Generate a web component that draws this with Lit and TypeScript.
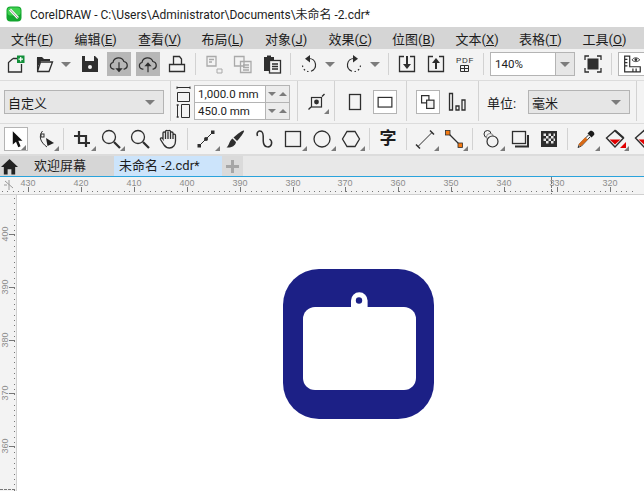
import { LitElement, css, html, svg } from "lit";
import { customElement } from "lit/decorators.js";

const DARK = "#2e2e2e";
const DIM = "#a9a9a9";

const line = (d: string, c = DARK, w = 1.3) =>
  svg`<path d=${d} fill="none" stroke=${c} stroke-width=${w} />`;
const fill = (d: string, c = DARK) => svg`<path d=${d} fill=${c} />`;

const cloud = "M7 17.5H6a3.6 3.6 0 0 1-.6-7.1 6.2 6.2 0 0 1 11.9-1.1 4.2 4.2 0 0 1 .7 8.2H17";

const icons: Record<string, unknown> = {
  new: svg`${line("M9 6.5H13M17.5 12V20H4.500V10.500L9 6.500")}
    <rect x="13" y="3.500" width="7.500" height="7.500" fill="#12903a" />
    ${line("M16.700 5V9.500M14.500 7.200H19", "#fff", 1.200)}`,
  open: svg`${fill("M4 5h5l2 2h6v2H8l-2 4-2 1z")}${line("M4.600 6V19.500H16L19.500 10H7.500L4.600 19")}`,
  save: svg`${fill("M4 4H17L20 7V20H4z")}<rect x="7" y="4" width="9" height="5" fill="#f3f3f3" /><circle cx="12" cy="15" r="2" fill="#f3f3f3" />`,
  down: svg`${line(cloud)}${line("M12 10V20")}${fill("M8 16.500H16L12 21z")}`,
  up: svg`${line(cloud)}${line("M12 13V21")}${fill("M8 14.500H16L12 10z")}`,
  print: svg`${line("M8.500 12V4.500H14.500L16.500 7V12M4.500 12.500H19.500V19.500H4.500z")}`,
  copy: svg`${line("M5 4.500H14V14H5zM7 7.500H12M7 10H10", DIM)}${line("M15 17H20V21H15z", DIM, 1)}`,
  clone: svg`${line("M3.500 4.500H13V14H3.500zM9.500 9.500H20V20.500H9.500zM12 13H18M12 15.500H18M12 18H18", DIM)}`,
  paste: svg`${fill("M4 5h3V3.500h4V5h3v14H4z")}<rect x="9.500" y="8.500" width="11" height="12.500" fill="#f3f3f3" stroke=${DARK} stroke-width="1.300" />${line("M12 12H18M12 14.500H18M12 17H18")}`,
  undo: svg`${line("M12 6.500A6.500 6.500 0 0 1 14 19.200", DARK, 1.200)}
    <path d="M11.500 19.500A6.500 6.500 0 0 1 5.500 13" fill="none" stroke=${DARK} stroke-width="1.200" stroke-dasharray="1.500 2.200" />
    ${fill("M13 3V10.500L8 6.800z")}`,
  redo: svg`${line("M12 6.500A6.500 6.500 0 0 0 10 19.200", DARK, 1.200)}
    <path d="M12.500 19.500A6.500 6.500 0 0 0 18.500 13" fill="none" stroke=${DARK} stroke-width="1.200" stroke-dasharray="1.500 2.200" />
    ${fill("M11 3V10.500L16 6.800z")}`,
  import: svg`${line("M9 4.500H4.500V19.500H19.500V4.500H15")}${line("M12 4V13", DARK, 2)}${fill("M8 12H16L12 17z")}`,
  export: svg`${line("M9 4.500H4.500V19.500H19.500V4.500H15")}${line("M12 10V17", DARK, 2)}${fill("M8 11H16L12 6z")}`,
  pdf: svg`<text x="12" y="11" text-anchor="middle" font-size="8" font-family="Liberation Sans, sans-serif" letter-spacing=".6" fill=${DARK}>PDF</text>${line("M7.500 13.500H15.500V19.500H7.500zM11.500 13.500V19.500M7.500 16.500H15.500", DARK, 1)}`,
  full: svg`${line("M4 8V4H8M16 4H20V8M4 16V20H8M16 20H20V16")}<rect x="6.500" y="6.500" width="11" height="11" fill=${DARK} />`,
  options: svg`${line("M4 3.500V20.500H21V15H9.500V3.500zM4 7H7M4 10.500H7M4 14H7M13 17V20.500M16.500 17V20.500")}${line("M12 7.500C14 4.500 18 4.500 20.500 7.500C18 10 14 10 12 7.500z", DARK, 1)}<circle cx="16.200" cy="7.300" r="1.500" fill=${DARK} />`,
  margin: svg`<rect x="5.500" y="7.500" width="10" height="9.500" fill="none" stroke=${DARK} stroke-width="1.200" />
    <circle cx="10.500" cy="12" r="2.400" fill=${DARK} />
    <path d="M2.500 19.500L5 17M16 6.500L18.500 4" stroke=${DARK} stroke-width="1.400" fill="none" />`,
  portrait: svg`<rect x="6.500" y="4.500" width="11" height="15" fill="none" stroke=${DARK} stroke-width="1.300" />`,
  landscape: svg`<rect x="4.500" y="7" width="15" height="10.500" fill="none" stroke=${DARK} stroke-width="1.300" />`,
  pages: svg`${line("M5 5H13V13H5z")}<rect x="10.500" y="10" width="8" height="9" fill="#f3f3f3" stroke=${DARK} stroke-width="1.300" />`,
  bars: svg`${line("M4.500 3.500H7.500V20H4.500zM11 16H14V20H11zM17 10H20V20H17z")}`,
  pointer: svg`${fill("M8.500 3.500L19 14H14.500L17 20L14.500 21L12 15L8.500 18z", "#111")}`,
  shape: svg`${line("M9.500 4C5.500 9 7 15 14 20", DARK, 1)}<rect x="8" y="7" width="3" height="3" fill="#f3f3f3" stroke=${DARK} stroke-width="1" />${fill("M13 11L21 16L14.500 19z", "#222")}`,
  crop: svg`${line("M9 4V16H20M4 9H16V20", DARK, 2.200)}`,
  zoomA: svg`<circle cx="10" cy="10" r="6.500" fill="none" stroke=${DARK} stroke-width="1.300" />${line("M15 15L21 21", DARK, 2.200)}`,
  hand: svg`${line("M7 18L3.500 12.500C3 10.500 5 10.500 6 12V6C6 4.500 8 4.500 8.500 6V4.500C8.500 3 11 3 11 4.500V4.500C11 3 13.500 3 13.500 4.500V5.500C13.500 4.500 16 4.500 16 6V8C16 6.800 18.500 6.800 18.500 8.500V14C18.500 18 16 21 12.500 21C10 21 8.500 20 7 18ZM8.500 6V12M11 5V12M13.500 5.500V12M16 8V12")}`,
  node: svg`${line("M5 19L19 5", DARK, 1)}<rect x="3.500" y="17" width="3.500" height="3.500" fill=${DARK} /><rect x="17" y="3.500" width="3.500" height="3.500" fill=${DARK} /><circle cx="12" cy="12" r="2" fill=${DARK} />`,
  brush: svg`${fill("M21 3.500C22 4.500 16 12 14 14L10.500 10.500C12.500 8.500 20 2.500 21 3.500z")}${fill("M9.500 11.500L13 15C12.500 19 8 21 3.500 20.500C6 19 6 14 9.500 11.500z")}`,
  curve: svg`${line("M5.500 9C4 5 7 3 9.500 4.500C12.500 6.500 10.500 12 11.500 16C12.500 21 18.500 21 19.500 17C20 15 19 13 17.500 12", DARK, 1.500)}`,
  rect: svg`<rect x="4.500" y="4.500" width="15" height="15" fill="none" stroke=${DARK} stroke-width="1.300" />`,
  ellipse: svg`<circle cx="12" cy="12" r="8" fill="none" stroke=${DARK} stroke-width="1.300" />`,
  hex: svg`${line("M8 4.500H16L20.500 12L16 19.500H8L3.500 12z")}`,
  dim: svg`${line("M5 19.500L19 5.500", DARK, 1)}${line("M3 17.500L7 21.500M17 3.500L21 7.500", DARK, 1.500)}`,
  link: svg`${line("M7 7L17 17", DARK, 1.300)}<rect x="3.500" y="3.500" width="4.500" height="4.500" fill="#f47a12" stroke=${DARK} stroke-width=".8" /><rect x="16" y="16" width="4.500" height="4.500" fill="#f47a12" stroke=${DARK} stroke-width=".8" />`,
  blend: svg`<circle cx="8.500" cy="7" r="3.500" fill="none" stroke=${DARK} stroke-width="1" /><circle cx="11" cy="10" r="3.500" fill="#f3f3f3" stroke="#888" stroke-width="1" /><circle cx="13.500" cy="14.500" r="5.500" fill="#f3f3f3" stroke=${DARK} stroke-width="1.200" />`,
  shadow: svg`<rect x="4.500" y="4.500" width="13" height="12" fill="none" stroke=${DARK} stroke-width="1.300" />${line("M20 8V19.500H7", DARK, 2)}`,
  checker: svg`<rect x="4" y="4" width="16" height="16" fill=${DARK} /><path d="M6.500 6.500h2.500v2.500h-2.500zM11.500 6.500h2.500v2.500h-2.500zM16.500 6.500h1.500v2.500h-1.500zM9 9h2.500v2.500H9zM14 9h2.500v2.500H14zM6.500 11.500h2.500V14H6.500zM11.500 11.500H14V14h-2.500zM16.500 11.500H18V14h-1.500zM9 14h2.500v2.500H9zM14 14h2.500v2.500H14z" fill="#e8e8e8" />`,
  dropper: svg`${fill("M13.500 6.500L17.500 10.500L20 8C21.500 6 18 2.500 16 4z", "#1c1c1c")}
    ${line("M14.500 8L5.500 17L4 20.500L7.500 19L16 10", DARK, 1)}${line("M12 11L5.800 17.500L6.500 18.200L13 12", "#d96a16", 2)}`,
  fillRed: svg`${line("M12 3.500L20.500 11L12 20L3.500 11z", DARK, 1.400)}${line("M12 3.500L20.500 11", DARK, 2.200)}${fill("M6.500 12.500H17.500L12 17.500z", "#e00000")}${fill("M23 15V21H17z", "#e00000")}`,
};

const ic = (name: string) => html`<svg class="ic" viewBox="0 0 24 24">${icons[name]}</svg>`;

type Item = string | { n: string; fly?: boolean; on?: boolean; box?: boolean };

const topItems: Item[] = ["new", "open", "~", "save", { n: "down", on: true }, { n: "up", on: true }, "print", "|", "copy", "clone", "paste", "|", "undo", "~", "redo", "~", "|", "import", "export", "pdf", "|"];
const toolItems: Item[] = [
  { n: "pointer", fly: true, box: true }, { n: "shape", fly: true }, "|",
  { n: "crop", fly: true }, { n: "zoomA", fly: true }, "zoomA", "hand", "|",
  { n: "node", fly: true }, "brush", "curve", { n: "rect", fly: true }, { n: "ellipse", fly: true }, { n: "hex", fly: true }, "|",
  "zi", "|",
  { n: "dim", fly: true }, { n: "link", fly: true }, "|",
  { n: "blend", fly: true }, "shadow", "checker", "|",
  { n: "dropper", fly: true }, { n: "fillRed", fly: true }, { n: "fillRed", fly: true },
];

const menus: [string, string][] = [
  ["文件", "F"], ["编辑", "E"], ["查看", "V"], ["布局", "L"], ["对象", "J"],
  ["效果", "C"], ["位图", "B"], ["文本", "X"], ["表格", "T"], ["工具", "O"],
];

const range = (n: number) => Array.from({ length: n }, (_, i) => i);

@customElement("app-root")
export class AppRoot extends LitElement {
  renderItem(it: Item) {
    if (it === "|") return html`<i class="sep"></i>`;
    if (it === "~") return html`<span class="drop"><b class="tri"></b></span>`;
    const o = typeof it === "string" ? { n: it } : it;
    const cls = `cell ${o.on ? "on" : ""} ${o.box ? "box" : ""}`;
    return html`<span class=${cls}>
      ${o.n === "zi" ? html`<span class="zi">字</span>` : ic(o.n)}
      ${o.fly ? html`<b class="fly"></b>` : null}
    </span>`;
  }

  hRuler() {
    const step = 52.9;
    return html`<svg class="hruler" width="644" height="18">
      ${range(120).map((i) => {
        const x = 2 + i * (step / 10);
        return svg`<rect x=${Math.round(x)} y="14" width="1" height="1" fill="#777" />`;
      })}
      ${range(12).map((i) => {
        const x = Math.round(28 + i * step);
        return svg`<rect x=${x} y="10" width="1" height="5" fill="#777" />
          <text x=${x} y="9" text-anchor="middle">${430 - i * 10}</text>`;
      })}
      <path d="M551.500 0V17" stroke="#777" stroke-dasharray="3 1" />
      <path d="M5 4L13 11M9 3V13M4 8H7" stroke="#9a9a9a" fill="none" />
      <rect x="0" y="17" width="644" height="1" fill="#d0d0d0" />
    </svg>`;
  }

  vRuler() {
    const step = 53;
    return html`<svg class="vruler" width="17" height="296">
      ${range(56).map((i) => svg`<rect x="14" y=${3 + Math.round(i * (step / 10))} width="1" height="1" fill="#777" />`)}
      ${range(5).map((i) => {
        const y = 39 + i * step;
        return svg`<rect x="9" y=${y} width="6" height="1" fill="#777" />
          <text transform="translate(8 ${y}) rotate(-90)" text-anchor="middle">${400 - i * 10}</text>`;
      })}
      <path d="M0 294.500H15" stroke="#777" stroke-dasharray="3 1" />
      <rect x="16" y="0" width="1" height="296" fill="#d0d0d0" />
    </svg>`;
  }

  render() {
    return html`
      <div class="title">
        <svg class="logo" viewBox="0 0 16 16">
          <rect x="0.500" y="0.500" width="15" height="15" rx="4" fill="#12a52e" />
          <rect x="1.500" y="1.500" width="13" height="8" rx="3" fill="#3fd04f" />
          <path d="M4 3.500L12 12" stroke="#fff" stroke-width="2.600" />
          <path d="M4 3.500L12 12" stroke="#222" stroke-width=".5" />
        </svg>
        <span>CorelDRAW - C:\\Users\\Administrator\\Documents\\未命名 -2.cdr*</span>
      </div>
      <nav class="menu">
        ${menus.map(([t, k]) => html`<span class="mi">${t}(<u>${k}</u>)</span>`)}
      </nav>

      <div class="bar top">
        ${topItems.map((i) => this.renderItem(i))}
        <div class="zoombox"><span class="zv">140%</span><span class="za"><b class="tri"></b></span></div>
        <span class="cell gapl">${ic("full")}</span>
        <i class="sep"></i>
        <span class="cell box opt">${ic("options")}</span>
      </div>

      <div class="bar props">
        <div class="combo paper"><span>自定义</span><b class="tri"></b></div>
        <i class="sep tall first"></i>
        <div class="sizes">
          <svg class="sz" viewBox="0 0 15 33">
            <path d="M1 1.500H14M1 .5V3M14 .5V3M1.500 6.500H13.500V15.500H1.500z" fill="none" stroke=${DARK} />
            <path d="M1.500 18.500V31.500M.5 19H3M.5 31H3M5.500 18.500H13.500V31.500H5.500z" fill="none" stroke=${DARK} />
          </svg>
          <div class="fields">
            ${["1,000.0 mm", "450.0 mm"].map(
              (v) => html`<div class="field"><span class="val">${v}</span>
                <span class="spin"><b class="tri small"></b><b class="tri small up"></b></span></div>`
            )}
          </div>
        </div>
        <i class="sep tall"></i>
        <span class="cell wide">${ic("margin")}<b class="fly"></b></span>
        <i class="sep tall"></i>
        <span class="cell port">${ic("portrait")}</span>
        <span class="cell box land">${ic("landscape")}</span>
        <i class="sep tall"></i>
        <span class="cell box pg">${ic("pages")}</span>
        <span class="cell bars">${ic("bars")}</span>
        <i class="sep tall"></i>
        <span class="label">单位:</span>
        <div class="combo unit"><span>毫米</span><b class="tri"></b></div>
        <i class="sep tall"></i>
      </div>

      <div class="bar tools">${toolItems.map((i) => this.renderItem(i))}</div>

      <div class="tabs">
        <span class="home">
          <svg width="17" height="17" viewBox="0 0 18 17"><path d="M9 0.500L0 9H3V17H7V11.500H11V17H15V9H18z" fill="#222" /></svg>
        </span>
        <span class="tab">欢迎屏幕</span>
        <span class="tab active">未命名 -2.cdr*</span>
        <span class="plus"><svg width="13" height="13" viewBox="0 0 13 13"><path d="M6.500 0V13M0 6.500H13" stroke="#a6a6a6" stroke-width="3" /></svg></span>
      </div>

      ${this.hRuler()}
      <div class="work">
        ${this.vRuler()}
        <div class="canvas">
          <svg class="art" width="151" height="150" viewBox="0 0 151 150">
            <rect width="151" height="150" rx="36" fill="#1c2086" />
            <rect x="20" y="38" width="113" height="83" rx="12" fill="#fff" />
            <path d="M68 40V31.500a8.300 8.300 0 0 1 16.600 0V40z" fill="#fff" />
            <circle cx="76" cy="31.500" r="3.200" fill="#1c2086" />
          </svg>
        </div>
      </div>
    `;
  }

  static styles = css`
    :host {
      display: block;
      width: 644px;
      height: 491px;
      overflow: hidden;
      background: #f3f3f3;
      font-family: Roboto, "Noto Sans CJK SC", sans-serif;
      color: #1d1d1d;
    }

    .title {
      height: 27px;
      background: #fff;
      display: flex;
      align-items: center;
      padding-left: 6px;
      gap: 8px;
      font-size: 12px;
      white-space: nowrap;
    }
    .logo {
      width: 16px;
      height: 16px;
    }

    .menu {
      height: 22px;
      background: #d5d5d5;
      display: flex;
      align-items: center;
      font-size: 13px;
      padding-left: 11px;
      gap: 24px;
      white-space: nowrap;
    }
    .mi {
      width: 39.500px;
    }
    .mi u {
      text-underline-offset: 1px;
    }

    .bar {
      display: flex;
      align-items: center;
      background: #f3f3f3;
      box-sizing: border-box;
    }
    .top {
      height: 32px;
      padding: 0 0 1px 1.500px;
      border-bottom: 1px solid #dcdcdc;
    }
    .props {
      height: 43px;
      padding: 0 0 0 4px;
      border-bottom: 1px solid #dcdcdc;
    }
    .tools {
      height: 32px;
      padding: 0 0 1px 1.500px;
      border-bottom: 2px solid #dcdcdc;
    }

    .cell {
      position: relative;
      flex: none;
      width: 29px;
      height: 24px;
      display: flex;
      align-items: center;
      justify-content: center;
      box-sizing: border-box;
    }
    .cell.on {
      width: 24px;
      margin: 0 2.500px;
      background: #b7b7b7;
    }
    .cell.box {
      width: 24px;
      margin: 0 2.500px;
      background: #fff;
      border: 1px solid #b4b4b4;
    }
    .ic {
      width: 24px;
      height: 24px;
      flex: none;
    }
    .on .ic,
    .box .ic {
      width: 22px;
      height: 22px;
    }
    .fly {
      position: absolute;
      right: 1px;
      bottom: 0;
      width: 0;
      height: 0;
      border-left: 5px solid transparent;
      border-bottom: 5px solid #7c7c7c;
    }
    .zi {
      font-size: 17px;
      font-weight: 700;
      line-height: 1;
    }

    .sep {
      flex: none;
      width: 1px;
      height: 22px;
      margin: 0 3.500px;
      background: #d2d2d2;
    }
    .sep.tall {
      height: 40px;
      margin: 0 4px;
      align-self: flex-start;
    }
    .sep.first {
      margin: 0 5px 0 6px;
    }

    .drop {
      flex: none;
      width: 13px;
      margin-right: 3px;
      display: flex;
      justify-content: center;
    }
    .tri {
      display: block;
      width: 0;
      height: 0;
      border-left: 5px solid transparent;
      border-right: 5px solid transparent;
      border-top: 5px solid #7c7c7c;
    }
    .tri.small {
      border-left-width: 4px;
      border-right-width: 4px;
      border-top-width: 4px;
    }
    .tri.up {
      border-top: 0;
      border-bottom: 4px solid #7c7c7c;
    }

    .zoombox {
      flex: none;
      display: flex;
      width: 85px;
      height: 24px;
      margin-left: 2.500px;
      box-sizing: border-box;
      border: 1px solid #b4b4b4;
      background: #fff;
      font-size: 11.500px;
    }
    .zv {
      flex: 1;
      padding-left: 4px;
      line-height: 22px;
    }
    .za {
      width: 18px;
      background: #e6e6e6;
      border-left: 1px solid #b4b4b4;
      display: flex;
      align-items: center;
      justify-content: center;
    }
    .gapl {
      margin-left: 3.500px;
    }
    .cell.opt {
      width: 28px;
      margin-right: 0;
    }

    .combo {
      flex: none;
      height: 24px;
      box-sizing: border-box;
      background: #e6e6e6;
      border: 1px solid #b4b4b4;
      display: flex;
      align-items: center;
      justify-content: space-between;
      padding: 0 8px 0 3px;
      font-size: 13px;
    }
    .paper {
      width: 160px;
    }
    .unit {
      width: 102px;
      margin: 0 2px 0 9px;
    }

    .sizes {
      display: flex;
      align-items: center;
      gap: 3px;
      margin-right: 3px;
    }
    .sz {
      width: 15px;
      height: 33px;
    }
    .fields {
      display: flex;
      flex-direction: column;
      width: 96px;
      box-sizing: border-box;
      border: 1px solid #b4b4b4;
    }
    .field {
      display: flex;
      height: 16px;
    }
    .field + .field {
      border-top: 1px solid #b4b4b4;
    }
    .val {
      width: 71px;
      box-sizing: border-box;
      background: #fff;
      border-right: 1px solid #b4b4b4;
      font-size: 11.500px;
      line-height: 16px;
      padding-left: 3px;
      white-space: nowrap;
    }
    .spin {
      flex: 1;
      display: flex;
      align-items: center;
      justify-content: space-around;
      background: #ececec;
    }
    .wide {
      width: 24px;
      margin-left: 4px;
    }
    .port {
      margin-left: 1.500px;
    }
    .cell.land {
      margin: 0 5px 0 3.500px;
    }
    .cell.pg {
      margin: 0 0 0 5px;
    }
    .bars {
      margin: 0 2.500px;
    }
    .label {
      flex: none;
      width: 32px;
      margin-left: 4px;
      font-size: 13px;
      white-space: nowrap;
    }

    .tabs {
      height: 20px;
      display: flex;
      background: #e8e8e8;
      font-size: 13px;
      line-height: 20px;
      border-bottom: 1px solid #2aa3dc;
    }
    .home {
      width: 33px;
      padding-left: 1px;
      box-sizing: border-box;
      background: #d6d6d6;
      display: flex;
      align-items: center;
    }
    .tab {
      width: 81px;
      padding-left: 1px;
      box-sizing: border-box;
      background: #d6d6d6;
    }
    .tab.active {
      width: 108px;
      padding-left: 5px;
      background: #cce4fb;
    }
    .plus {
      width: 21px;
      background: #dadada;
      display: flex;
      align-items: center;
      justify-content: center;
    }

    .hruler,
    .vruler {
      display: block;
      flex: none;
      font-family: "Liberation Sans", sans-serif;
      font-size: 9px;
      fill: #8d8d8d;
    }
    .work {
      display: flex;
      height: 296px;
    }
    .canvas {
      flex: 1;
      position: relative;
      background: #fff;
    }
    .art {
      position: absolute;
      left: 266px;
      top: 74px;
    }
  `;
}
